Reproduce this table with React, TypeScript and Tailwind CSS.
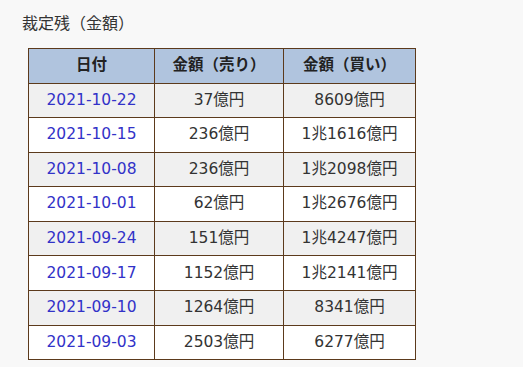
import React from "react";

const rows: [string, string, string][] = [
  ["2021-10-22", "37億円", "8609億円"],
  ["2021-10-15", "236億円", "1兆1616億円"],
  ["2021-10-08", "236億円", "1兆2098億円"],
  ["2021-10-01", "62億円", "1兆2676億円"],
  ["2021-09-24", "151億円", "1兆4247億円"],
  ["2021-09-17", "1152億円", "1兆2141億円"],
  ["2021-09-10", "1264億円", "8341億円"],
  ["2021-09-03", "2503億円", "6277億円"],
];

export default function App() {
  return (
    <div
      className="w-[523px] h-[367px] bg-[#f8f8f8] text-[#333333] pl-[22px] pt-[13px] overflow-hidden"
      style={{ fontFamily: '"DejaVu Sans", "Noto Sans CJK JP", sans-serif' }}
    >
      <div className="text-[16px] leading-[22px]">裁定残（金額）</div>
      <table className="mt-[13px] ml-[6px] border-collapse w-[387px] text-[15.5px] table-fixed">
        <colgroup>
          <col className="w-[126px]" />
          <col className="w-[129px]" />
          <col className="w-[132px]" />
        </colgroup>
        <thead>
          <tr className="h-[34.5px] bg-[#b0c4de]">
            <th className="border border-[#5c3a1c] p-0 font-bold text-[#222222]">日付</th>
            <th className="border border-[#5c3a1c] p-0 font-bold text-[#222222]">金額（売り）</th>
            <th className="border border-[#5c3a1c] p-0 font-bold text-[#222222]">金額（買い）</th>
          </tr>
        </thead>
        <tbody>
          {rows.map((r, i) => (
            <tr key={r[0]} className={`h-[34.6px] ${i % 2 === 0 ? "bg-[#f0f0f0]" : "bg-white"}`}>
              <td className="border border-[#5c3a1c] p-0 text-center text-[#3232c8]">{r[0]}</td>
              <td className="border border-[#5c3a1c] p-0 text-center">{r[1]}</td>
              <td className="border border-[#5c3a1c] p-0 text-center">{r[2]}</td>
            </tr>
          ))}
        </tbody>
      </table>
    </div>
  );
}
